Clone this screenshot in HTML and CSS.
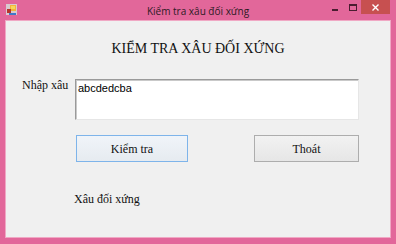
FILE: index.html
```html
<!DOCTYPE html>
<html lang="vi">
<head>
<meta charset="utf-8">
<title>Kiểm tra xâu đối xứng</title>
<link rel="stylesheet" href="styles.css">
</head>
<body>
<div class="window">
  <div class="titlebar">
    <div class="tb-left">
      <svg class="app-icon" width="11" height="11" viewBox="0 0 11 11">
        <rect x="0" y="0" width="11" height="11" fill="#d9c9cf"/>
        <rect x="4" y="1" width="6" height="6" fill="#f2b43a"/>
        <rect x="5" y="2" width="4" height="3" fill="#f7d65c"/>
        <rect x="1" y="5" width="4" height="4" fill="#b8322c"/>
        <rect x="3" y="9" width="7" height="2" fill="#3f78c8"/>
      </svg>
    </div>
    <div class="tb-title">Kiểm tra xâu đối xứng</div>
    <div class="tb-controls">
      <span class="ctl">
        <svg width="7" height="2" viewBox="0 0 7 2"><rect x="0" y="0" width="6" height="2" fill="#4a1d30"/></svg>
      </span>
      <span class="ctl">
        <svg width="8" height="7" viewBox="0 0 8 7"><rect x="0.5" y="0.5" width="7" height="6" fill="none" stroke="#4a1d30"/><rect x="0" y="0" width="8" height="2" fill="#4a1d30"/></svg>
      </span>
      <span class="ctl ctl-close">
        <svg width="7" height="7" viewBox="0 0 7 7"><path d="M0.5 0.5 L6.5 6.5 M6.5 0.5 L0.5 6.5" stroke="#ffffff" stroke-width="1.4"/></svg>
      </span>
    </div>
  </div>
  <div class="client">
    <h1 class="heading">KIỂM TRA XÂU ĐỐI XỨNG</h1>
    <div class="input-row">
      <label class="label">Nhập xâu</label>
      <div class="textbox">abcdedcba</div>
    </div>
    <div class="button-row">
      <button class="btn btn-default">Kiểm tra</button>
      <button class="btn btn-exit">Thoát</button>
    </div>
    <p class="result">Xâu đối xứng</p>
  </div>
</div>
</body>
</html>
```
FILE: styles.css
```css
html, body {
  margin: 0;
  padding: 0;
  background: #e2679a;
}

.window {
  width: 396px;
  height: 244px;
  background: #e2679a;
  display: flex;
  flex-direction: column;
  box-sizing: border-box;
}

.titlebar {
  height: 20px;
  display: grid;
  grid-template-columns: 1fr auto 1fr;
  align-items: start;
}

.tb-left {
  padding: 4px 0 0 6px;
  display: flex;
}

.app-icon {
  display: block;
}

.tb-title {
  font-family: "Open Sans", "Noto Sans", sans-serif;
  font-size: 10px;
  line-height: 20px;
  color: #2e1a24;
  white-space: nowrap;
  padding-top: 1px;
}

.tb-controls {
  display: flex;
  justify-content: flex-end;
  padding-right: 6px;
}

.ctl {
  width: 17px;
  height: 14px;
  display: flex;
  align-items: center;
  justify-content: center;
}

.ctl:first-child svg {
  margin-top: 5px;
}

.ctl-close {
  width: 29px;
  background: #c75050;
}

.client {
  flex: 1;
  margin: 0 5px 6px 5px;
  border: 1px solid #f0a8c4;
  background: #f0f0f0;
  padding-top: 20px;
  box-sizing: border-box;
  font-family: "Liberation Serif", "Times New Roman", serif;
  color: #111;
}

.heading {
  margin: 0;
  font-size: 14px;
  line-height: 16px;
  font-weight: normal;
  text-align: center;
  color: #111;
}

.input-row {
  display: grid;
  grid-template-columns: 53px 284px;
  padding-left: 16px;
  margin-top: 21px;
  align-items: start;
}

.label {
  font-size: 12px;
  line-height: 14px;
}

.textbox {
  margin-top: 1px;
  height: 41px;
  box-sizing: border-box;
  border-style: solid;
  border-width: 1px;
  border-color: #9a9a9a #e6e6e6 #e6e6e6 #9a9a9a;
  box-shadow: inset 1px 1px 0 #c9c9c9;
  background: #ffffff;
  font-family: "Liberation Sans", Arial, sans-serif;
  font-size: 11px;
  line-height: 13px;
  padding: 2px 2px 0 2px;
  color: #000;
}

.button-row {
  display: flex;
  padding-left: 70px;
  gap: 66px;
  margin-top: 15px;
}

.btn {
  height: 27px;
  box-sizing: border-box;
  margin: 0;
  padding: 0;
  font-family: "Liberation Serif", "Times New Roman", serif;
  font-size: 12px;
  line-height: 14px;
  color: #111;
  border: 1px solid #adadad;
  background: linear-gradient(#f2f2f2, #e6e6e6);
  border-radius: 0;
}

.btn-default {
  width: 112px;
  border-color: #7eb4ea;
  background: linear-gradient(#f0f4f9, #e6ebf0);
}

.btn-exit {
  width: 105px;
}

.result {
  margin: 30px 0 0 68px;
  font-size: 12px;
  line-height: 14px;
}
```
